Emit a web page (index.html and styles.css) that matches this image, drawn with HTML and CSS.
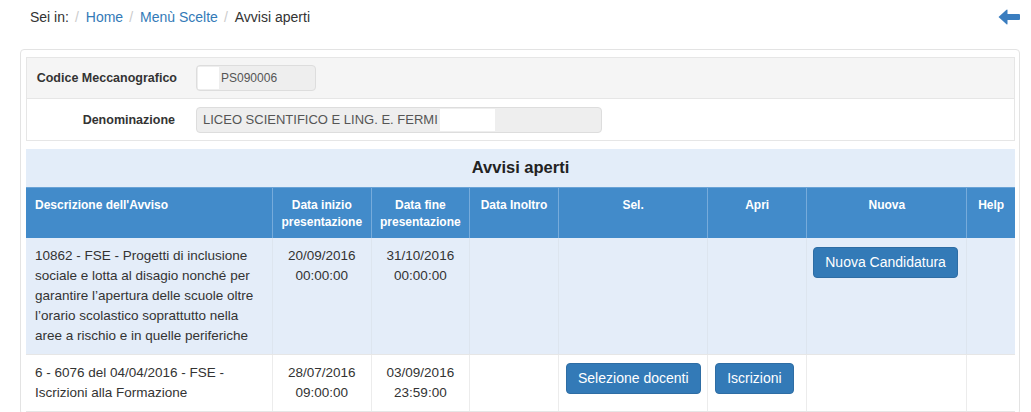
FILE: index.html
```html
<!DOCTYPE html>
<html lang="it">
<head>
<meta charset="utf-8">
<title>Avvisi aperti</title>
<link rel="stylesheet" href="styles.css">
</head>
<body>
<div class="crumbs">
  <ol class="breadcrumb">
    <li class="lead">Sei in:</li>
    <li><a href="#">Home</a></li>
    <li><a href="#">Menù Scelte</a></li>
    <li class="active">Avvisi aperti</li>
  </ol>
  <a href="#" class="back" aria-label="Indietro">
    <svg width="22" height="16" viewBox="0 0 22 16"><path d="M0.5 8 L8.5 0.8 Q9.5 0 9.5 1.2 L9.5 5 L21 5 Q22 5 22 6 L22 10 Q22 11 21 11 L9.5 11 L9.5 14.8 Q9.5 16 8.5 15.2 Z" fill="#3a7dbf"/></svg>
  </a>
</div>
<div class="panel">
  <div class="form-box">
    <div class="frow grey">
      <div class="flabel">Codice Meccanografico</div>
      <div class="finput w1"><span class="patch p1"></span>PS090006</div>
    </div>
    <div class="frow">
      <div class="flabel">Denominazione</div>
      <div class="finput w2">LICEO SCIENTIFICO E LING. E. FERMI<span class="patch p2"></span></div>
    </div>
  </div>
  <table class="avvisi">
    <colgroup>
      <col class="c1"><col class="c2"><col class="c3"><col class="c4"><col class="c5"><col class="c6"><col class="c7"><col class="c8">
    </colgroup>
    <thead>
      <tr class="title"><th colspan="8">Avvisi aperti</th></tr>
      <tr class="head">
        <th class="left">Descrizione dell'Avviso</th>
        <th>Data inizio presentazione</th>
        <th>Data fine presentazione</th>
        <th>Data Inoltro</th>
        <th>Sel.</th>
        <th>Apri</th>
        <th>Nuova</th>
        <th>Help</th>
      </tr>
    </thead>
    <tbody>
      <tr class="hl">
        <td>10862 - FSE - Progetti di inclusione sociale e lotta al disagio nonché per garantire l’apertura delle scuole oltre l’orario scolastico soprattutto nella aree a rischio e in quelle periferiche</td>
        <td class="c">20/09/2016<br>00:00:00</td>
        <td class="c">31/10/2016<br>00:00:00</td>
        <td></td>
        <td></td>
        <td></td>
        <td><a href="#" class="btn">Nuova Candidatura</a></td>
        <td></td>
      </tr>
      <tr>
        <td>6 - 6076 del 04/04/2016 - FSE - Iscrizioni alla Formazione</td>
        <td class="c">28/07/2016<br>09:00:00</td>
        <td class="c">03/09/2016<br>23:59:00</td>
        <td></td>
        <td><a href="#" class="btn">Selezione docenti</a></td>
        <td><a href="#" class="btn">Iscrizioni</a></td>
        <td></td>
        <td></td>
      </tr>
    </tbody>
  </table>
</div>
</body>
</html>
```

FILE: styles.css
```css
* { box-sizing: border-box; }
body {
  margin: 0;
  font-family: "Liberation Sans", Arial, sans-serif;
  font-size: 14px;
  color: #333;
  background: #fff;
}
a { text-decoration: none; }

.crumbs {
  display: flex;
  justify-content: space-between;
  align-items: flex-start;
  height: 49px;
  padding: 7px 11px 0 30px;
}
.breadcrumb {
  display: flex;
  list-style: none;
  margin: 0;
  padding: 0;
  line-height: 20px;
}
.breadcrumb li + li::before {
  content: "/";
  color: #ccc;
  padding: 0 7px 0 6px;
}
.breadcrumb a { color: #337ab7; }
.breadcrumb .active { color: #333; }
.back { display: block; margin-top: 2px; }
.back svg { display: block; }

.panel {
  margin: 0 11px 0 20px;
  border: 1px solid #e3e3e3;
  border-radius: 4px;
  padding: 7px 4px 2px 5px;
}

.form-box {
  border: 1px solid #e6e6e6;
}
.frow {
  display: flex;
  align-items: center;
  padding: 7px 0;
  height: 41px;
}
.frow.grey {
  background: #f5f5f5;
  border-bottom: 1px solid #e6e6e6;
}
.flabel {
  width: 160px;
  text-align: right;
  padding-right: 10px;
  font-weight: bold;
  font-size: 12.5px;
  color: #333;
}
.frow + .frow .flabel { padding-right: 12px; }
.finput {
  margin-left: 9px;
  height: 26px;
  background: #eee;
  border: 1px solid #ddd;
  border-radius: 4px;
  font-size: 13px;
  color: #555;
  display: flex;
  align-items: center;
  padding: 0 6px;
}
.finput.w1 { width: 120px; padding-left: 1px; font-size: 12px; }
.finput.w2 { width: 406px; }
.patch { display: block; background: #fff; height: 22px; }
.p1 { width: 21px; margin-right: 2px; }
.p2 { width: 55px; margin-left: 2px; }

.avvisi {
  width: 100%;
  margin-top: 8px;
  border-collapse: collapse;
  table-layout: fixed;
  font-size: 13.5px;
}
.c1 { width: 246px; }
.c2 { width: 99px; }
.c3 { width: 98px; }
.c4 { width: 89px; }
.c5 { width: 149px; }
.c6 { width: 99px; }
.c7 { width: 160px; }
.c8 { width: 48px; }

.title th {
  background: #e3edf9;
  height: 38px;
  font-size: 16.5px;
  font-weight: bold;
  color: #222;
  text-align: center;
  padding: 0;
}
.head th {
  background: #428bca;
  color: #fff;
  font-size: 12px;
  font-weight: bold;
  line-height: 17px;
  height: 49px;
  padding: 9px 6px 7px;
  text-align: center;
  vertical-align: top;
  border-left: 1px solid #76abdb;
  border-top: 1px solid #6aa3d6;
}
.head th:first-child { border-left: none; }
.head th.left { text-align: left; padding-left: 9px; }

.avvisi td {
  padding: 8px;
  line-height: 20px;
  vertical-align: top;
  color: #333;
  border-left: 1px solid #ececec;
  border-bottom: 1px solid #e6e6e6;
}
.avvisi td:first-child { border-left: none; padding-left: 9px; }
.avvisi td.c { text-align: center; }
.hl td {
  background: #e4edf9;
  border-left-color: #dde5ef;
  height: 116px;
}
.btn {
  display: inline-block;
  margin: 0 0 0 -1px;
  padding: 5px 11px;
  line-height: 19px;
  font-size: 14px;
  color: #fff;
  background: #337ab7;
  border: 1px solid #2e6da4;
  border-radius: 4px;
  white-space: nowrap;
}
.hl .btn { margin-top: 1px; margin-left: -2px; }
```
